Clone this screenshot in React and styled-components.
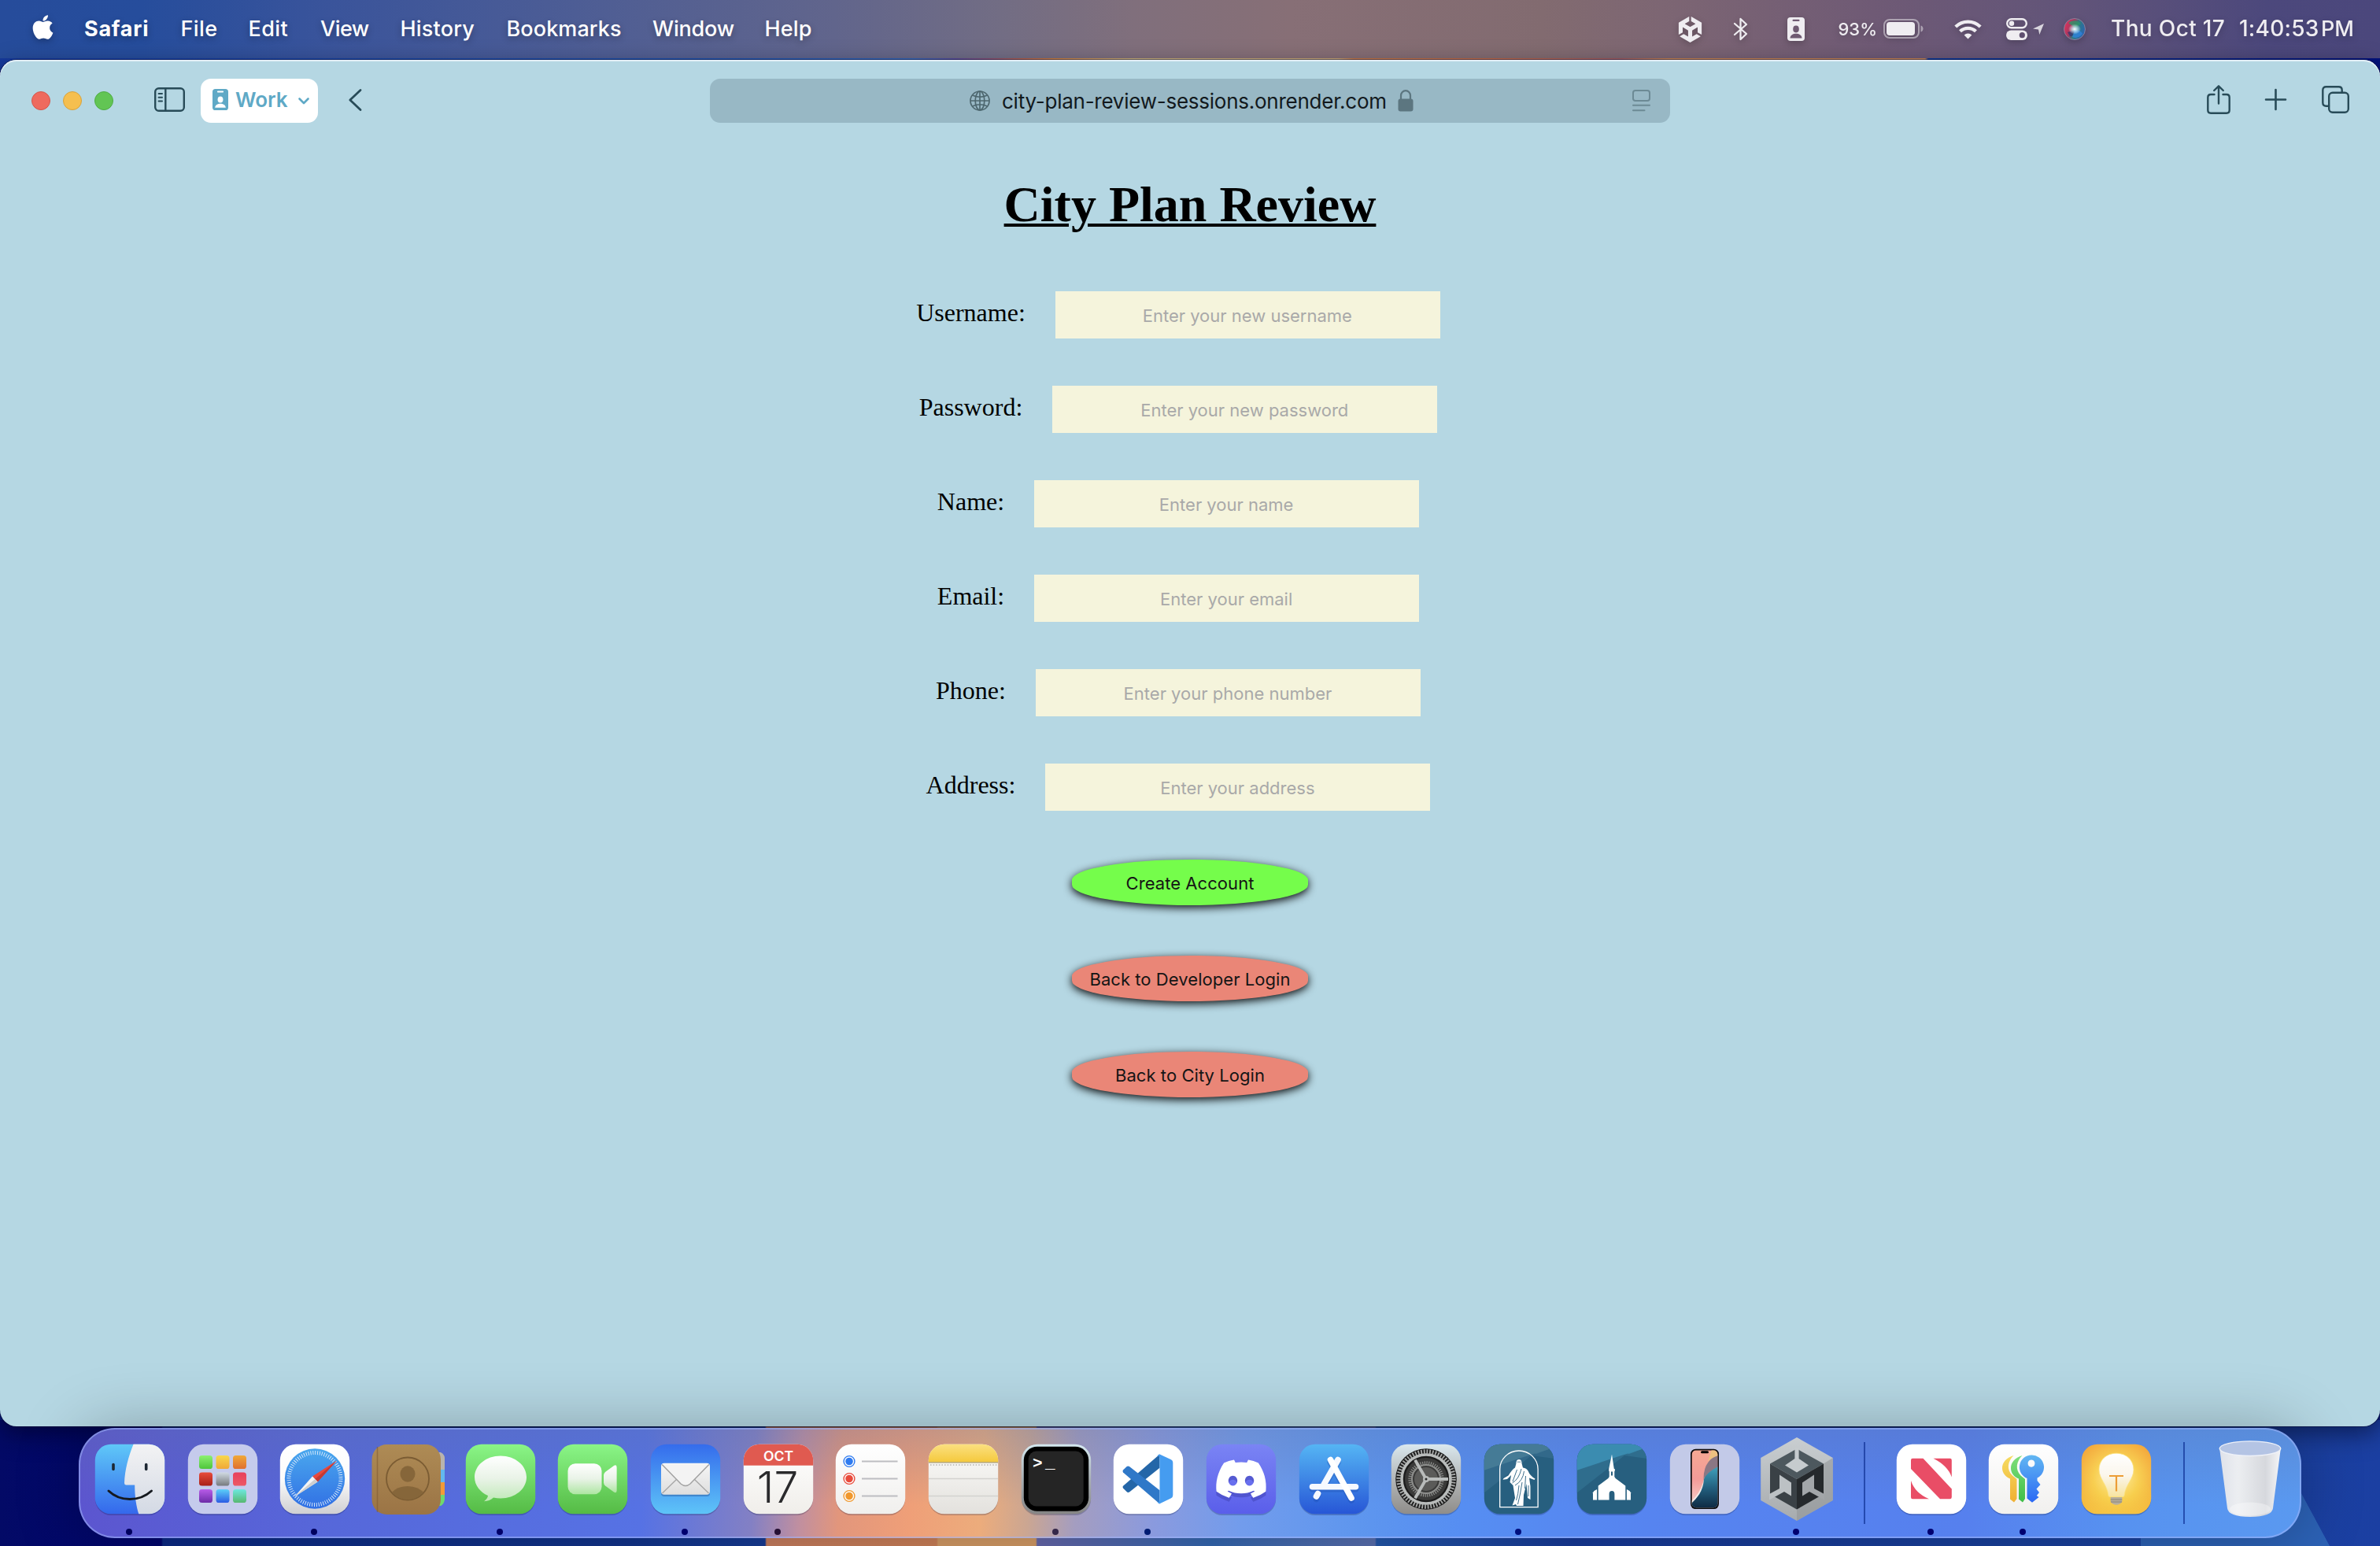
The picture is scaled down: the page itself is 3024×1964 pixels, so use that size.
import React from "react";
import styled, { createGlobalStyle } from "styled-components";
import { FaApple, FaDiscord } from "react-icons/fa";
import { SiUnity } from "react-icons/si";

const ui = `Inter, "Liberation Sans", sans-serif`;
const serif = `"Liberation Serif", "Times New Roman", serif`;

const GlobalStyle = createGlobalStyle`
  *, *::before, *::after { box-sizing: border-box; }
  body { margin: 0; background: #0a1f80; overflow: hidden; }
  svg { display: block; flex: none; overflow: visible; }
`;

const Desktop = styled.div`
  display: flex;
  flex-direction: column;
  width: 3024px;
  height: 1964px;
  overflow: hidden;
  font-family: ${ui};
  background:
    linear-gradient(90deg, #163a9c 0, #2356ad 950px, #3668b8 1160px, #5a4c98 1215px, #8c5070 1260px, #b8624a 1300px, #d0803c 1340px, #c9b27c 1440px, #c9a878 1700px, #c87a45 1720px, #c06a48 1900px, #a05c60 2060px, #c88552 2120px, #c88552 2446px, #0c3a9a 2450px, #03127c 3024px) 0 0 / 100% 90px no-repeat,
    linear-gradient(61.7deg, #2c62b6 86.8%, transparent 87.1%) 2720px 100% / 240px 67px no-repeat,
    linear-gradient(90deg, #030a66 0, #01056e 205px, #0c2a85 207px, #12348c 800px, #173c96 972px, #c87e60 974px, #cd8058 1190px, #d59c66 1192px, #d59c66 1316px, #6668ac 1318px, #3468b2 1540px, #5a70b0 1747px, #2458ac 1749px, #173a98 2000px, #1a429e 2700px, #1b3fa2 3024px) 0 100% / 100% 160px no-repeat,
    #0a1f80;
`;

const MenuBar = styled.header`
  display: flex;
  align-items: center;
  flex: none;
  height: 74px;
  padding-bottom: 2px;
  padding-left: 41px;
  color: #fff;
  background: linear-gradient(90deg, #264c9b 0, #264d9c 180px, #3a549b 420px, #4d5d95 730px, #61658c 1060px, #726d84 1270px, #806f7c 1440px, #876f76 1640px, #826b70 1960px, #7d6673 2110px, #6f5a75 2380px, #615479 2640px, #4c487c 2880px, #4b477c 3024px);
`;

const MenuItem = styled.span`
  width: ${(p) => p.$w}px;
  flex: none;
  font-size: 27px;
  font-weight: ${(p) => (p.$strong ? 700 : 500)};
  letter-spacing: ${(p) => p.$ls || 0}px;
  white-space: nowrap;
  text-shadow: 0 3px 8px rgba(0, 0, 0, 0.3);
`;

const AppleSlot = styled.div`
  width: 66.5px;
  margin-top: -4px;
  margin-right: -0.5px;
  flex: none;
  filter: drop-shadow(0 3px 4px rgba(0, 0, 0, 0.25));
`;

const Status = styled.div`
  display: flex;
  align-items: center;
  width: 893px;
  margin-left: auto;
  color: #efedf1;
`;

const StatusSlot = styled.div`
  display: flex;
  align-items: center;
  flex: none;
  width: ${(p) => p.$w}px;
  font-size: ${(p) => p.$size || 27}px;
  font-weight: 500;
  letter-spacing: ${(p) => p.$ls || 0}px;
  white-space: nowrap;
  padding-top: ${(p) => p.$pt || 0}px;
  filter: drop-shadow(0 3px 4px rgba(0, 0, 0, 0.22));
`;

const Window = styled.main`
  display: flex;
  flex-direction: column;
  flex: none;
  height: 1736px;
  margin-top: 2px;
  border-radius: 21px;
  background: #b5d7e3;
  box-shadow: inset 0 2px 0 #e2eef6, 0 0 0 1px rgba(0, 0, 40, 0.45), 0 10px 30px rgba(0, 0, 20, 0.5);
`;

const Toolbar = styled.div`
  display: flex;
  align-items: center;
  flex: none;
  height: 104px;
  padding-left: 40px;
`;

const Lights = styled.div`
  display: flex;
  gap: 16px;
`;

const Light = styled.span`
  width: 24px;
  height: 24px;
  border-radius: 50%;
  background: ${(p) => p.$c};
  border: 1px solid ${(p) => p.$edge};
`;

const Tool = styled.div`
  margin-left: ${(p) => p.$ml}px;
  margin-bottom: ${(p) => p.$mb || 0}px;
  color: #284b58;
`;

const ProfilePill = styled.div`
  display: flex;
  align-items: center;
  width: 149px;
  height: 56px;
  margin-left: 20px;
  padding-left: 15px;
  padding-bottom: 3px;
  border-radius: 13px;
  background: #fff;
  color: #5fa9c6;
  font-size: 26px;
  font-weight: 600;
  gap: 9px;
`;

const PillChevron = styled.div`
  margin-left: 4px;
  margin-top: 3px;
`;

const AddressBar = styled.div`
  display: flex;
  align-items: center;
  flex: none;
  width: 1220px;
  height: 56px;
  margin-left: 442px;
  padding-left: 330px;
  border-radius: 13px;
  background: #98b8c5;
  color: #12191d;
  font-size: 26px;
  letter-spacing: -0.25px;
`;

const Url = styled.span`
  flex: none;
  width: 518px;
  padding-left: 15px;
  white-space: nowrap;
`;

const LockSlot = styled.div`
  flex: none;
  width: 298px;
`;

const Page = styled.section`
  display: flex;
  flex-direction: column;
  align-items: center;
  padding-top: 43px;
`;

const Title = styled.h1`
  margin: 0;
  height: 74px;
  line-height: 74px;
  font-family: ${serif};
  font-size: 64px;
  font-weight: 700;
  color: #000;
  text-decoration: underline;
  text-decoration-thickness: 4px;
  text-underline-offset: 3px;
`;

const Form = styled.form`
  display: flex;
  flex-direction: column;
  align-items: center;
  gap: 60px;
  margin-top: 73px;
`;

const Field = styled.label`
  display: flex;
  align-items: center;
  height: 60px;
  padding-left: 1px;
  padding-right: 31px;
  gap: 38px;
`;

const FieldName = styled.span`
  padding-bottom: 6px;
  font-family: ${serif};
  font-size: 32px;
  color: #000;
`;

const Input = styled.input`
  width: 489px;
  height: 60px;
  margin: 0;
  padding: 2px 1px 0 0;
  border: 0;
  border-radius: 0;
  background: #f5f4dc;
  font-family: ${ui};
  font-size: 22px;
  text-align: center;
  &::placeholder { color: #a9a9a9; opacity: 1; }
`;

const Actions = styled.div`
  display: flex;
  flex-direction: column;
  gap: 64px;
  margin-top: 62px;
`;

const Action = styled.button`
  width: 300px;
  height: 58px;
  padding: 2px 0 0;
  border: 0;
  border-radius: 50% / 45%;
  background: ${(p) => (p.$primary ? "#75fd4b" : "#ea8677")};
  box-shadow: 0 3px 11px rgba(0, 0, 0, 0.95);
  font-family: ${ui};
  font-size: 22px;
  letter-spacing: 0.06px;
  color: #151515;
  white-space: nowrap;
`;

const Dock = styled.nav`
  position: relative;
  z-index: 1;
  display: flex;
  align-items: flex-start;
  flex: none;
  width: 2824px;
  height: 140px;
  margin: 2px 0 0 100px;
  padding-left: 4px;
  border: 2px solid rgba(160, 180, 250, 0.55);
  border-radius: 46px;
  background:
    linear-gradient(180deg, rgba(90, 110, 160, 0.28), rgba(90, 110, 160, 0) 70%),
    linear-gradient(93deg, #5c55cf 0, #5668da 330px, #5672e4 720px, #8380c4 860px, #c08fa0 920px, #e2967c 970px, #ef9f78 1060px, #ecac7c 1150px, #cba692 1210px, #a49dc0 1270px, #8a9ade 1370px, #729cec 1480px, #5e96ee 1630px, #568ef2 1760px, #5684f0 2000px, #5680ee 2400px, #5792f0 2600px, #5a99f0 2824px);
  background-origin: border-box;
  box-shadow: 0 0 80px rgba(0, 0, 0, 0.27);
`;

const Cell = styled.div`
  display: flex;
  flex-direction: column;
  align-items: center;
  flex: none;
  width: 117.7px;
  padding-top: 5px;
`;

const RunningDot = styled.span`
  width: 8px;
  height: 8px;
  margin-top: 5px;
  margin-right: 2px;
  border-radius: 50%;
  background: ${(p) => p.$c};
`;

const Divider = styled.span`
  flex: none;
  width: 2px;
  height: 104px;
  margin: 16px ${(p) => p.$r}px 0 ${(p) => p.$l}px;
  background: rgba(15, 50, 150, 0.7);
`;

/* ---------- menu bar and toolbar drawings ---------- */

const line = { fill: "none", stroke: "currentColor", strokeLinecap: "round", strokeLinejoin: "round" };

const Bluetooth = () => (
  <svg width="20" height="30" viewBox="0 0 20 30" {...line} strokeWidth="2.3">
    <path d="M2 8 L17 21 L9.5 28 V2 L17 9 L2 22" />
  </svg>
);

const Badge = ({ w, h, hole }) => (
  <svg width={w} height={h} viewBox="0 0 22 30" preserveAspectRatio="none">
    <rect width="22" height="30" rx="4" fill="currentColor" />
    <rect x="6.5" y="2.8" width="9" height="2.2" rx="1.1" fill={hole} />
    <ellipse cx="11" cy="15" rx="3.8" ry="4.4" fill={hole} />
    <path d="M3.5 26.5 C3.5 18.8 18.5 18.8 18.5 26.5 Z" fill={hole} />
  </svg>
);

const Battery = () => (
  <svg width="52" height="26" viewBox="0 0 52 26">
    <rect x="1" y="1" width="44" height="23" rx="7" fill="none" stroke="currentColor" strokeOpacity="0.5" strokeWidth="2" />
    <rect x="4" y="4" width="36" height="17" rx="4" fill="currentColor" />
    <path d="M47.5 8.5 C51.5 9.5 51.5 15.5 47.5 16.5 Z" fill="currentColor" fillOpacity="0.5" />
  </svg>
);

const Wifi = () => (
  <svg width="35" height="26" viewBox="0 0 35 26" fill="none" stroke="currentColor" strokeWidth="4.2">
    <path d="M1.8 10 A22.5 22.5 0 0 1 33.2 10" />
    <path d="M7.5 15.8 A14.5 14.5 0 0 1 27.5 15.8" />
    <path d="M17.5 25.5 L12.6 20.6 A7 7 0 0 1 22.4 20.6 Z" fill="currentColor" stroke="none" />
  </svg>
);

const ControlCenter = () => (
  <svg width="27" height="28" viewBox="0 0 27 28">
    <rect x="1.2" y="1.2" width="24.6" height="11" rx="5.5" fill="none" stroke="currentColor" strokeWidth="2.4" />
    <circle cx="7" cy="6.7" r="3.2" fill="currentColor" />
    <rect x="0" y="15.5" width="27" height="12.5" rx="6.2" fill="currentColor" />
    <circle cx="20.3" cy="21.7" r="3.6" fill="#5f4f70" />
  </svg>
);

const LocationArrow = () => (
  <svg width="14" height="14" viewBox="0 0 14 14">
    <path d="M14 0 L8.3 14 L7 7.4 L0 6.4 Z" fill="currentColor" fillOpacity="0.85" />
  </svg>
);

const Siri = () => (
  <svg width="28" height="28" viewBox="0 0 28 28">
    <defs>
      <linearGradient id="siri" x1="0" y1="0.3" x2="1" y2="0.7">
        <stop offset="0" stopColor="#e0305c" />
        <stop offset="0.35" stopColor="#a03a60" />
        <stop offset="0.55" stopColor="#2e7c80" />
        <stop offset="1" stopColor="#2b62b8" />
      </linearGradient>
      <radialGradient id="siriGlow">
        <stop offset="0" stopColor="#fff" />
        <stop offset="0.4" stopColor="#d8f4ff" stopOpacity="0.7" />
        <stop offset="1" stopColor="#fff" stopOpacity="0" />
      </radialGradient>
    </defs>
    <circle cx="14" cy="14" r="13.5" fill="url(#siri)" stroke="#8b7f9c" strokeWidth="1" />
    <path d="M6 6 Q14 0 22 7 Q16 12 14 12 Z" fill="#2f9468" fillOpacity="0.8" />
    <path d="M5 18 Q12 16 15 15 Q12 25 8 23 Z" fill="#2a3470" fillOpacity="0.7" />
    <path d="M14 15 Q22 15 24 20 Q18 27 11 24 Z" fill="#2f86e6" fillOpacity="0.7" />
    <ellipse cx="14" cy="14" rx="8" ry="6.5" fill="url(#siriGlow)" />
  </svg>
);

const SidebarIcon = () => (
  <svg width="39" height="31" viewBox="0 0 39 31" {...line} strokeWidth="2.4">
    <rect x="1.2" y="1.2" width="36.6" height="28.6" rx="4.5" />
    <path d="M14.3 1.2 V29.8" />
    <path d="M5.6 8 H10 M5.6 12.7 H10 M5.6 17.4 H10" strokeWidth="2" />
  </svg>
);

const BackIcon = () => (
  <svg width="17" height="28" viewBox="0 0 17 28" {...line} strokeWidth="2.8">
    <path d="M15 1.5 L1.8 14 L15 26.5" />
  </svg>
);

const Globe = () => (
  <svg width="26" height="26" viewBox="0 0 26 26" fill="none" stroke="#4d676f" strokeWidth="1.7">
    <circle cx="13" cy="13" r="12" />
    <ellipse cx="13" cy="13" rx="5.8" ry="12" />
    <path d="M13 1 V25 M1 13 H25 M3.6 6 Q13 10.5 22.4 6 M3.6 20 Q13 15.5 22.4 20" />
  </svg>
);

const Lock = () => (
  <svg width="20" height="28" viewBox="0 0 20 28">
    <path d="M4 13 V7.5 A6 6.3 0 0 1 16 7.5 V13" fill="none" stroke="#5c7680" strokeWidth="2.2" />
    <rect x="0.5" y="11.5" width="19" height="16" rx="3" fill="#5c7680" />
  </svg>
);

const Reader = () => (
  <svg width="23" height="28" viewBox="0 0 23 28" fill="none" stroke="#6c8a95" strokeWidth="2" strokeLinecap="round">
    <rect x="1" y="1" width="21" height="13" rx="3" />
    <path d="M1 19.8 H22 M1 26.3 H15.5" />
  </svg>
);

const Share = () => (
  <svg width="30" height="37" viewBox="0 0 30 37" {...line} strokeWidth="2.4">
    <path d="M9.5 12 H5 Q1.3 12 1.3 15.7 V32 Q1.3 35.7 5 35.7 H25 Q28.7 35.7 28.7 32 V15.7 Q28.7 12 25 12 H20.5" />
    <path d="M15 23.5 V1.5 M9.2 7 L15 1.3 L20.8 7" />
  </svg>
);

const Plus = () => (
  <svg width="27" height="27" viewBox="0 0 27 27" {...line} strokeWidth="2.6">
    <path d="M13.5 1 V26 M1 13.5 H26" />
  </svg>
);

const Tabs = () => (
  <svg width="35" height="35" viewBox="0 0 35 35" {...line} strokeWidth="2.4">
    <rect x="9.2" y="8.7" width="24.6" height="25" rx="4.5" />
    <path d="M9 25.8 H5.5 Q1.3 25.8 1.3 21.6 V5.5 Q1.3 1.3 5.5 1.3 H21.5 Q25.7 1.3 25.7 5.5 V8.5" />
  </svg>
);

/* ---------- dock drawings: origin at the icon centre ---------- */

const Glyph = ({ children }) => (
  <svg width="116" height="116" viewBox="-58 -58 116 116">{children}</svg>
);

const Grad = ({ id, from, mid, to, x2 = 0, y2 = 1 }) => (
  <linearGradient id={id} x1="0" y1="0" x2={x2} y2={y2}>
    <stop offset="0" stopColor={from} />
    {mid && <stop offset="0.5" stopColor={mid} />}
    <stop offset="1" stopColor={to} />
  </linearGradient>
);

const Tile = ({ fill, id }) => (
  <>
    {id && <clipPath id={id}><rect x="-44.2" y="-44.2" width="88.4" height="88.4" rx="20" /></clipPath>}
    <rect x="-44" y="-42.5" width="88" height="88.4" rx="20" fill="#000830" fillOpacity="0.22" />
    <rect x="-44.2" y="-44.2" width="88.4" height="88.4" rx="20" fill={fill} />
  </>
);

const Finder = () => (
  <Glyph>
    <Grad id="fBlue" from="#5fc8f8" to="#3468ec" />
    <Grad id="fGrey" from="#f3f3f4" to="#d3d9e4" />
    <Tile id="fClip" fill="url(#fBlue)" />
    <path clipPath="url(#fClip)" d="M4.8 -45 C-2 -28 -6.4 -12 -7 5 Q-7 7.4 -5 7.4 H6.2 C6.2 22 8 34 11.5 45 H45 V-45 Z" fill="url(#fGrey)" />
    <path d="M-21 -18.5 V-12.5 M20.7 -18.5 V-12.5" stroke="#1d2733" strokeWidth="3.6" strokeLinecap="round" />
    <path d="M-27 15 Q-16 25.5 0 25.5 Q16 25.5 27.5 15" fill="none" stroke="#15191f" strokeWidth="3" strokeLinecap="round" />
  </Glyph>
);

const padColors = [
  ["#8cf072", "#4fc63c"], ["#f8d84c", "#f0a838"], ["#f0a838", "#e07030"],
  ["#e84c3c", "#a82018"], ["#d0dae2", "#767a7e"], ["#e8405c", "#ec5866"],
  ["#b85ce8", "#6c2ca8"], ["#5ccff8", "#2c5ce4"], ["#6ce8e0", "#58b870"],
];

const Launchpad = () => (
  <Glyph>
    <Tile fill="#c5cbec" />
    {padColors.map(([a, b], i) => (
      <g key={i}>
        <Grad id={`pad${i}`} from={a} to={b} />
        <rect x={-30 + (i % 3) * 21.5} y={-30 + Math.floor(i / 3) * 21.5} width="17" height="17" rx="3.6" fill={`url(#pad${i})`} />
      </g>
    ))}
  </Glyph>
);

const Compass = () => (
  <Glyph>
    <Grad id="cTile" from="#ffffff" mid="#fbfbfb" to="#cfcfd2" />
    <Grad id="cDial" from="#4aa8ee" to="#3170e4" />
    <Tile fill="url(#cTile)" />
    <circle r="38.2" cy="-0.5" fill="url(#cDial)" />
    <circle r="33" cy="-0.5" fill="none" stroke="#e3effb" strokeWidth="5" strokeDasharray="0.9 1.98" />
    <path d="M28 -23.5 L3.6 3.4 L-3 -3.4 Z" fill="#e8493c" />
    <path d="M28 -23.5 L3.6 3.4 L0.3 0 Z" fill="#c33a34" />
    <path d="M-26 22.5 L3.6 3.4 L-3 -3.4 Z" fill="#f5f5f5" />
    <path d="M-26 22.5 L3.6 3.4 L0.3 0 Z" fill="#cfcfcf" />
  </Glyph>
);

const Contacts = () => (
  <Glyph>
    <Grad id="kTile" from="#ae8b55" to="#9b7445" />
    <path d="M34 -34 H42 Q47 -31 47 -27 V-12 H34 Z" fill="#b9b4ad" />
    <path d="M34 -12 H47 V4 H34 Z" fill="#62b8ee" />
    <path d="M34 4 H47 V20 H34 Z" fill="#f29b38" />
    <path d="M34 20 H47 V26 Q46 32 42 34 H34 Z" fill="#6fd96c" />
    <rect x="-45.5" y="-44" width="87.5" height="89" rx="19" fill="url(#kTile)" />
    <path d="M-38.5 -41 V42" stroke="#7e5c33" strokeWidth="1.5" strokeOpacity="0.6" />
    <clipPath id="kClip"><circle cy="-0.5" r="26.5" /></clipPath>
    <circle cy="-0.5" r="27" fill="none" stroke="#7b5c33" strokeWidth="1.8" />
    <g clipPath="url(#kClip)" fill="#86663a">
      <ellipse cy="-6.5" rx="9.5" ry="10.2" />
      <path d="M-22 30 V19 Q-14 9 0 9 Q14 9 22 19 V30 Z" />
    </g>
  </Glyph>
);

const Messages = () => (
  <Glyph>
    <Grad id="green" from="#8af587" to="#55bb45" />
    <Grad id="bubble" from="#ffffff" mid="#e9f3e7" to="#bfe9b6" />
    <Tile fill="url(#green)" />
    <path d="M0 -29.5 C18.5 -29.5 33 -17.5 33 -2.5 C33 12.5 18.5 24.5 0 24.5 C-3 24.5 -6 24.2 -9 23.6 Q-14 28 -21 28.3 Q-16.5 25 -16 21 C-26 16.5 -33 8 -33 -2.5 C-33 -17.5 -18.5 -29.5 0 -29.5 Z" fill="url(#bubble)" />
  </Glyph>
);

const FaceTime = () => (
  <Glyph>
    <Grad id="green2" from="#8af587" to="#55bb45" />
    <Grad id="cam" from="#ffffff" mid="#e9f3e7" to="#aee6a2" />
    <Tile fill="url(#green2)" />
    <rect x="-31.5" y="-19.8" width="43" height="39" rx="9.5" fill="url(#cam)" />
    <path d="M14 -5 Q14 -7 16 -9 L27 -17 Q30.6 -19 30.6 -15 V14.5 Q30.6 18.5 27 16.5 L16 8.5 Q14 6.5 14 4.5 Z" fill="url(#cam)" />
  </Glyph>
);

const Mail = () => (
  <Glyph>
    <Grad id="mTile" from="#356cec" to="#5ec4f8" />
    <Grad id="mEnv" from="#f6f6f6" to="#dedede" />
    <Tile fill="url(#mTile)" />
    <rect x="-31" y="-18" width="62" height="40" rx="4" fill="#103070" fillOpacity="0.3" />
    <rect x="-31" y="-20.3" width="62" height="40" rx="4" fill="url(#mEnv)" />
    <path d="M-29.5 18 L-11 0 M29.5 18 L11 0" stroke="#a6a6a6" strokeWidth="1.3" />
    <path d="M-29.8 -18.5 L-6 6 Q0 11 6 6 L29.8 -18.5" fill="#f3f3f3" stroke="#a2a2a2" strokeWidth="1.5" />
  </Glyph>
);

const Calendar = () => (
  <Glyph>
    <Grad id="calTile" from="#ffffff" to="#f0eeea" />
    <Tile id="calClip" fill="url(#calTile)" />
    <rect x="-45" y="-45" width="90" height="27.7" fill="#e05a50" clipPath="url(#calClip)" />
    <text x="0" y="-23.3" textAnchor="middle" fontFamily="Inter, sans-serif" fontSize="17.6" fontWeight="600" fill="#fff">OCT</text>
    <text x="-1" y="30.3" textAnchor="middle" fontFamily="Inter, sans-serif" fontSize="55" fontWeight="300" fill="#2a2a2c">17</text>
  </Glyph>
);

const Reminders = () => (
  <Glyph>
    <Grad id="remTile" from="#ffffff" to="#f0efed" />
    <Tile fill="url(#remTile)" />
    {["#2f7bf0", "#e84b3c", "#f0982e"].map((c, i) => (
      <g key={c} transform={`translate(0 ${-22.5 + i * 22})`}>
        <circle cx="-27" r="6.9" fill="#fff" stroke={c} strokeWidth="1.4" />
        <circle cx="-27" r="4.8" fill={c} />
        <path d="M-11 0 H34.5" stroke="#bdbdc1" strokeWidth="2" />
      </g>
    ))}
  </Glyph>
);

const Notes = () => (
  <Glyph>
    <Grad id="nTile" from="#fcfcfa" to="#e3e1dd" />
    <Grad id="nTop" from="#fbe183" to="#f5c93c" />
    <Tile id="nClip" fill="url(#nTile)" />
    <rect x="-45" y="-45" width="90" height="23.5" fill="url(#nTop)" clipPath="url(#nClip)" />
    <path d="M-44 -21.2 H44" stroke="#a99a66" strokeWidth="1.2" />
    <path d="M-42 -18 H44" stroke="#b7b5b0" strokeWidth="1.6" strokeDasharray="1.6 2" />
    <path d="M-44 -0.5 H44 M-44 21.5 H44" stroke="#d3d2cf" strokeWidth="1.6" />
  </Glyph>
);

const Terminal = () => (
  <Glyph>
    <Grad id="tTile" from="#d5e9f0" mid="#a9b0b4" to="#858585" />
    <Tile fill="url(#tTile)" />
    <rect x="-41.2" y="-41.2" width="82.4" height="82" rx="17" fill="#000" />
    <rect x="-35.3" y="-35.5" width="70" height="70" rx="10" fill="#252525" />
    <text x="-30" y="-14.5" fontFamily="'Liberation Mono', monospace" fontSize="21" fontWeight="700" fill="#fff">&gt;</text>
    <text x="-14" y="-14.5" fontFamily="'Liberation Mono', monospace" fontSize="21" fontWeight="700" fill="#fff">_</text>
  </Glyph>
);

const Code = () => (
  <Glyph>
    <Tile fill="#fff" />
    <path d="M14.5 -31.5 V-14.3 L-24 16.5 Q-26 17.5 -27.5 16 L-32 11.5 Q-33 10 -32 8.8 Z" fill="#2466a8" />
    <path d="M-27.3 -16 Q-25.8 -17 -24 -16 L14.5 14.3 V31.5 L-32 -8.5 Q-33 -10.2 -32 -11.5 Z" fill="#2f78c8" />
    <path d="M14.5 -31.5 L29 -24.8 Q31.3 -23.5 31.3 -21 V20.5 Q31.3 23 29 24.3 L14.5 31.2 Q12.5 31.2 11.5 29 Q14.5 30 14.5 26 V-26 Q14.5 -30 11.5 -29.5 Q12.5 -31.5 14.5 -31.5 Z" fill="#459cf0" />
  </Glyph>
);

const Discord = () => (
  <Glyph>
    <Grad id="dTile" from="#7a84f4" to="#5a5eea" />
    <Tile fill="url(#dTile)" />
    <g transform="translate(-34.5 -34.8)">
      <FaDiscord y="5" size={69} color="#3c3fae" opacity="0.45" />
      <FaDiscord size={69} color="#fff" />
    </g>
  </Glyph>
);

const AppStore = () => (
  <Glyph>
    <Grad id="aTile" from="#55b5f4" to="#2756d6" />
    <Tile fill="url(#aTile)" />
    <g stroke="#1c4aa8" strokeOpacity="0.3" strokeWidth="7.6" strokeLinecap="round" transform="translate(0 3)">
      <path d="M-27.5 9.8 H27.5 M5 -24.5 L-13 7 M-20.5 18 L-22.5 22.5 M-5 -24.5 L22 24" />
    </g>
    <g stroke="#f6f9ff" strokeWidth="7.6" strokeLinecap="round">
      <path d="M5 -24.5 L-13 7 M-20.5 18.5 L-22.5 22" />
      <path d="M-27.5 9.8 H27.5" />
      <path d="M-4.5 -24.5 L22 24" stroke="#fff" />
    </g>
  </Glyph>
);

const Settings = () => (
  <Glyph>
    <Grad id="sTile" from="#dae8ee" mid="#b3b6b7" to="#8f8d8a" />
    <Tile fill="url(#sTile)" />
    <circle r="38.8" fill="#1c1c1c" />
    <circle r="35" fill="none" stroke="#a7a9a8" strokeWidth="5.4" strokeDasharray="1.8 1.87" />
    <circle r="31" fill="none" stroke="#b9bcbb" strokeWidth="3.6" />
    <circle r="27" fill="#3a3a39" />
    <circle r="20.5" fill="none" stroke="#8d8e8c" strokeWidth="4.4" strokeDasharray="1.2 1.48" />
    <circle r="18" fill="none" stroke="#8d8e8c" strokeWidth="2" />
    <circle r="15" fill="#5b5b59" />
    <path d="M0 0 H28 M0 0 L-14 -24.2 M0 0 L-14 24.2" stroke="#b9bcbb" strokeWidth="3.8" />
    <circle r="4" fill="#b9bcbb" />
    <circle r="1.5" fill="#2a2a2a" />
  </Glyph>
);

const Facets = ({ a, b, clip }) => (
  <g clipPath={`url(#${clip})`}>
    <path d="M-45 -45 H45 V-26 L16 -30 L-45 18 Z" fill={b} />
    <path d="M-45 -45 H45 V-40 L12 -30 L-45 -11 Z" fill={a} />
    <path d="M-20 -45 H45 V-41 L22 -32 Z" fill={a} fillOpacity="0.8" />
  </g>
);

const GospelLibrary = () => (
  <Glyph>
    <Tile id="gClip" fill="#275f7f" />
    <Facets a="#457b96" b="#32698a" clip="gClip" />
    <path d="M-24.3 35.6 V-12.5 A24.2 23.5 0 0 1 24.1 -12.5 V35.6 Z" fill="none" stroke="#fff" strokeWidth="1.3" />
    <path d="M0 -25 C3 -25 3.6 -22 3.6 -19.5 L5 -14.5 Q9.5 -14 11.5 -10.5 Q14 -4 20.5 -0.5 L19.5 1 L13 -1.5 L14.5 9 V26 L11 24 L9.5 6 L6 20 L5.5 34 H-3 L-4 32 L-8.5 33.5 L-5 24 L-7.5 8 L-11.5 4 L-10 -5 L-15 0 L-20.5 0.8 L-19.5 -1 L-13.5 -4.5 Q-9 -12 -5 -14.5 L-3.6 -19.5 C-3.6 -22 -3 -25 0 -25 Z" fill="#fff" />
    <path d="M-2.5 -12 L-8 3 M3 -13 Q0 0 -8.5 5 M6.5 -10 Q5 2 -5 8 M4 4 Q2 18 -1.5 32 M0 8 Q-1 20 -3.5 27 M8.5 -4 L7.5 12 M12 8 V22" fill="none" stroke="#275f7f" strokeWidth="0.9" />
    <path d="M-2.4 -21.8 H2.4" stroke="#275f7f" strokeWidth="0.7" />
  </Glyph>
);

const MemberTools = () => (
  <Glyph>
    <Tile id="hClip" fill="#275f7f" />
    <Facets a="#3b8cb0" b="#2f6d8d" clip="hClip" />
    <path fillRule="evenodd" fill="#fff" d="M0 -31.5 L2.8 -13 H3.8 V-10 H3.3 V-3 L4.6 -1 L17.3 8.5 V26.6 H3.4 V19 Q3.4 15 0 15 Q-3.4 15 -3.4 19 V26.6 H-17.3 V8.5 L-4.6 -1 L-3.3 -3 V-10 H-3.8 V-13 Z M-1 -9.5 V-4.5 H1 V-9.5 Z" />
    <path fill="#fff" d="M-18.9 13 V26.6 H-24 V18 H-24.7 L-22.5 15 Z M18.9 13 V26.6 H24 V18 H24.7 L22.5 15 Z" />
  </Glyph>
);

const PhoneMirror = () => (
  <Glyph>
    <Tile fill="#c3cae8" />
    <Grad id="pPink" from="#f6a893" mid="#f39b98" to="#f8d8d2" />
    <Grad id="pTeal" from="#3fa2bd" mid="#23607f" to="#0d2740" />
    <rect x="-18" y="-38.3" width="36" height="76.4" rx="6.5" fill="#0d0d10" />
    <clipPath id="pClip"><rect x="-16.3" y="-36.5" width="32.6" height="72.8" rx="5" /></clipPath>
    <g clipPath="url(#pClip)">
      <rect x="-17" y="-37" width="34" height="74" fill="url(#pPink)" />
      <path d="M17 -31 Q-4 -22 -1 5 L17 -12 Z" fill="#8b7784" />
      <path d="M17 -38 V-30 Q8 -27 4 -22 L9 -38 Z" fill="#eec080" />
      <path d="M-17 28 Q-6 18 -2 4 L0 -3 L-4 22 L-17 34 Z" fill="#f4ebe8" />
      <path d="M17 -16 Q2 -8 -1 0 C-2 16 -10 24 -17 31 V38 H17 Z" fill="url(#pTeal)" />
    </g>
    <rect x="-5" y="-35.8" width="10" height="3" rx="1.5" fill="#000" />
  </Glyph>
);

const UnityHub = () => (
  <Glyph>
    <Grad id="uHex" from="#c9ced1" to="#a7abae" />
    <path d="M0 -53 L45.8 -27 V27 L0 53 L-45.8 27 V-27 Z" fill="url(#uHex)" />
    <path d="M45.8 -27 V27 L0 53 V38.5 L34 19 V-19.5 Z" fill="#8f9396" fillOpacity="0.55" />
    <path d="M0 -38.5 L34 -19.5 L0 0 L-34 -19.5 Z" fill="#4d585e" />
    <path d="M-34 -19.5 L0 0 V38.5 L-34 19 Z" fill="#3a4146" />
    <path d="M34 -19.5 L0 0 V38.5 L34 19 Z" fill="#25292c" />
    <path d="M-2.6 -40 H2.6 V-26 L15 -17.5 L0 -8.5 L-15 -17.5 L-2.6 -26 Z" fill="#c6cbce" />
    <path d="M-22 -5.5 L-7 4.5 V21.5 L-16 16 L-35 26.5 V19 L-22 12 Z" fill="#bcc1c4" />
    <path d="M22 -5.5 L7 4.5 V21.5 L16 16 L35 26.5 V19 L22 12 Z" fill="#a2a6a9" />
  </Glyph>
);

const News = () => (
  <Glyph>
    <Tile fill="#fff" />
    <g fill="#e94d66">
      <path d="M-24 -26.3 H-10.5 L25.8 12.5 V23 Q25.8 25.3 23.5 25.3 H11 L-26 -13 V-24 Q-26 -26.3 -24 -26.3 Z" />
      <path d="M2.5 -26.3 H23.8 Q25.8 -26.3 25.8 -24 V-2.5 Q21 -17 2.5 -26.3 Z" />
      <path d="M-26 2 Q-21 17.5 -3 25.3 H-24 Q-26 25.3 -26 23 Z" />
    </g>
  </Glyph>
);

const Passwords = () => (
  <Glyph>
    <Grad id="wTile" from="#ffffff" to="#f1f0ee" />
    <Grad id="wBlue" from="#62b7f2" to="#2a68f4" />
    <Grad id="wGreen" from="#7fdf7c" to="#3fbe48" />
    <Grad id="wYel" from="#f6dc62" to="#f0b032" />
    <Tile fill="url(#wTile)" />
    <path d="M-12.5 -30 C-22 -27 -27 -21 -27 -14 C-27 -8 -23 -3 -17 -0.5 V25.5 L-12 29.5 L-8.5 25 V0 L-14 -4.5 C-22 -12 -20 -23 -12.5 -30 Z" fill="url(#wYel)" />
    <path d="M-1.5 -30 C-11 -27 -16 -21 -16 -14 C-16 -8 -12.5 -3 -6 -0.5 V25.5 L-1 29.5 L2 25 V0 L-3.5 -4.5 C-11 -12 -9 -23 -1.5 -30 Z" fill="url(#wGreen)" />
    <path fillRule="evenodd" d="M10 -30.5 A15.3 15.3 0 0 1 17.5 -1.5 V2 L21.5 7 L16.5 12.5 L20 17 L16.8 21 L19.5 23 L11 29.8 L4.5 24.5 V-1 A15.3 15.3 0 0 1 10 -30.5 Z M10 -24.5 A4.4 4.6 0 1 0 10.01 -24.5 Z" fill="url(#wBlue)" />
  </Glyph>
);

const Tips = () => (
  <Glyph>
    <radialGradient id="tipTile" cx="0.5" cy="0.5" r="0.72">
      <stop offset="0" stopColor="#fff0a8" />
      <stop offset="0.45" stopColor="#f8cf52" />
      <stop offset="1" stopColor="#f19a35" />
    </radialGradient>
    <Grad id="tipLow" from="#f6cf4000" to="#f6ca44" />
    <Grad id="tipBulb" from="#ffffff" mid="#fbf6ec" to="#f7e4a0" />
    <Tile fill="url(#tipTile)" />
    <rect x="-44.2" y="0" width="88.4" height="44.2" rx="20" fill="url(#tipLow)" fillOpacity="0.7" />
    <path d="M0 -32.8 C13 -32.8 22 -24 22 -12 C22 0 12 6 10 21 Q10 22.5 8 22.5 H-8 Q-10 22.5 -10 21 C-12 6 -22 0 -22 -12 C-22 -24 -13 -32.8 0 -32.8 Z" fill="url(#tipBulb)" stroke="#fbe27c" strokeWidth="0.8" />
    <path d="M-9 -4 H9 M0 -4 V15.5" stroke="#ec9d36" strokeWidth="2.2" />
    <path d="M-7.3 23 H7.3 V29 Q4 32.8 0 32.8 Q-4 32.8 -7.3 29 Z" fill="#b6ae9d" />
    <path d="M-7.3 26 H7.3 M-7 29 H7" stroke="#877f70" strokeWidth="0.9" />
  </Glyph>
);

const Trash = () => (
  <Glyph>
    <linearGradient id="bin">
      <stop offset="0" stopColor="#dfe2ea" />
      <stop offset="0.3" stopColor="#eceef1" />
      <stop offset="0.75" stopColor="#d6d8dd" />
      <stop offset="1" stopColor="#f4f5f7" />
    </linearGradient>
    <path d="M-38.8 -38.5 L-29 37 Q-28 47.5 0 48 Q28 47.5 29 37 L38.8 -38.5 Z" fill="url(#bin)" />
    <ellipse cy="38" rx="26" ry="8.5" fill="#fff" fillOpacity="0.35" />
    <ellipse cy="-38.8" rx="38.8" ry="9.3" fill="#b4c4e4" stroke="#eef1f8" strokeWidth="1.4" />
  </Glyph>
);

const apps = [
  [Finder, "#00005e"], [Launchpad], [Compass, "#00005e"], [Contacts], [Messages, "#00006a"],
  [FaceTime], [Mail, "#00006e"], [Calendar, "#251033"], [Reminders], [Notes],
  [Terminal, "#342748"], [Code, "#001c72"], [Discord], [AppStore], [Settings],
  [GospelLibrary, "#00107e"], [MemberTools], [PhoneMirror], [UnityHub, "#000070"],
];
const recents = [[News, "#000070"], [Passwords, "#000070"], [Tips]];

const menus = [
  ["File", 86, 0.4], ["Edit", 91.5, 0.4], ["View", 101.5, -0.5], ["History", 135, 0.2],
  ["Bookmarks", 185.5, 0.1], ["Window", 142.5, -0.2], ["Help", 63, 0.2],
];

const fields = [
  ["Username:", "Enter your new username"],
  ["Password:", "Enter your new password"],
  ["Name:", "Enter your name"],
  ["Email:", "Enter your email"],
  ["Phone:", "Enter your phone number"],
  ["Address:", "Enter your address"],
];

const DockItem = ({ icon: Icon, dot }) => (
  <Cell>
    <Icon />
    {dot && <RunningDot $c={dot} />}
  </Cell>
);

export default function App() {
  return (
    <Desktop>
      <GlobalStyle />
      <MenuBar>
        <AppleSlot><FaApple size={35} style={{ marginLeft: -4 }} /></AppleSlot>
        <MenuItem $strong $w={122.5} $ls={0.75}>Safari</MenuItem>
        {menus.map(([name, w, ls]) => (
          <MenuItem key={name} $w={w} $ls={ls}>{name}</MenuItem>
        ))}
        <Status>
          <StatusSlot $w={71} $pt={2}><SiUnity size={33} /></StatusSlot>
          <StatusSlot $w={69} $pt={2}><Bluetooth /></StatusSlot>
          <StatusSlot $w={64.5} $pt={2}><Badge w={22} h={30} hole="#6f5a72" /></StatusSlot>
          <StatusSlot $w={57.5} $size={22} $pt={2}>93%</StatusSlot>
          <StatusSlot $w={90} $pt={2}><Battery /></StatusSlot>
          <StatusSlot $w={66} $pt={1}><Wifi /></StatusSlot>
          <StatusSlot $w={34} $pt={1}><ControlCenter /></StatusSlot>
          <StatusSlot $w={39} $pt={2}><LocationArrow /></StatusSlot>
          <StatusSlot $w={60} $pt={2}><Siri /></StatusSlot>
          <StatusSlot $w={163} $size={28} $ls={0.35}>Thu Oct 17</StatusSlot>
          <StatusSlot $w={104} $size={28} $ls={0.25}>1:40:53</StatusSlot>
          <StatusSlot $w={75}>PM</StatusSlot>
        </Status>
      </MenuBar>

      <Window>
        <Toolbar>
          <Lights>
            <Light $c="#ee6a5e" $edge="#d5554a" />
            <Light $c="#f5bf4f" $edge="#d8a23c" />
            <Light $c="#62c554" $edge="#4fac43" />
          </Lights>
          <Tool $ml={52} $mb={3}><SidebarIcon /></Tool>
          <ProfilePill>
            <Badge w={20} h={27} hole="#ffffff" />
            Work
            <PillChevron>
              <svg width="14" height="9" viewBox="0 0 14 9" {...line} strokeWidth="2.6">
                <path d="M1.5 1.5 L7 7 L12.5 1.5" />
              </svg>
            </PillChevron>
          </ProfilePill>
          <Tool $ml={39} $mb={2}><BackIcon /></Tool>
          <AddressBar>
            <Globe />
            <Url>city-plan-review-sessions.onrender.com</Url>
            <LockSlot><Lock /></LockSlot>
            <Reader />
          </AddressBar>
          <Tool $ml={682} $mb={3}><Share /></Tool>
          <Tool $ml={44} $mb={3}><Plus /></Tool>
          <Tool $ml={45} $mb={3}><Tabs /></Tool>
        </Toolbar>

        <Page>
          <Title>City Plan Review</Title>
          <Form>
            {fields.map(([name, hint]) => (
              <Field key={name}>
                <FieldName>{name}</FieldName>
                <Input placeholder={hint} />
              </Field>
            ))}
          </Form>
          <Actions>
            <Action type="button" $primary>Create Account</Action>
            <Action type="button">Back to Developer Login</Action>
            <Action type="button">Back to City Login</Action>
          </Actions>
        </Page>
      </Window>

      <Dock>
        {apps.map(([icon, dot], i) => <DockItem key={i} icon={icon} dot={dot} />)}
        <Divider $l={25.7} $r={25} />
        {recents.map(([icon, dot], i) => <DockItem key={i} icon={icon} dot={dot} />)}
        <Divider $l={26} $r={24} />
        <Cell><Trash /></Cell>
      </Dock>
    </Desktop>
  );
}
